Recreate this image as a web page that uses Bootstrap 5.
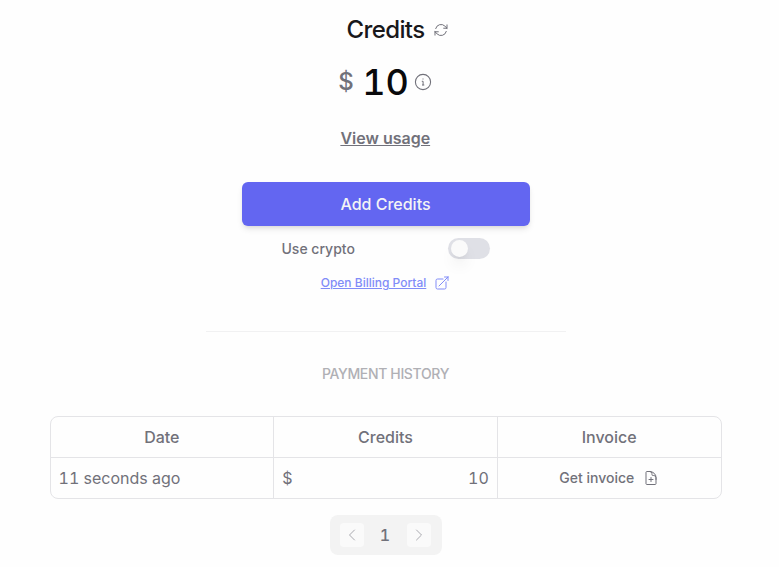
<!DOCTYPE html>
<html lang="en">
<head>
<meta charset="utf-8">
<meta name="viewport" content="width=device-width, initial-scale=1">
<title>Credits</title>
<link href="https://cdn.jsdelivr.net/npm/bootstrap@5.3.0/dist/css/bootstrap.min.css" rel="stylesheet">
<style>
body{font-family:Inter,"Liberation Sans",sans-serif;color:#71717a;background:#fefefe;line-height:24px;overflow:hidden}
svg{fill:none;stroke:currentColor;stroke-linecap:round;stroke-linejoin:round;flex:none;display:block}
.billing{width:672px;margin-left:49.5px;padding-top:14px}
.title{font-size:24px;line-height:32px;font-weight:500;color:#18181b;letter-spacing:-.6px;margin-left:24px;gap:8px}
.title svg{color:#71717a}
.balance{height:40px;margin-top:16px;margin-right:1px;font-variant-numeric:tabular-nums}
.currency{font-size:24px;font-weight:500;margin-right:8.5px}
.amount{font-size:36px;line-height:40px;font-weight:500;color:#09090b;margin-right:5px}
.usage{margin-top:24px;font-weight:600;color:#71717a;margin-right:.5px}
.add-btn{width:288px;height:44px;margin-top:32px;background:#6366f1!important;border:0;border-radius:6px;color:#f4f4f5!important;font-weight:500;box-shadow:0 4px 6px -1px #0000001a,0 2px 4px -2px #0000001a}
.crypto{width:208px;height:21px;margin-top:12px;font-size:14px;font-weight:500}
.switch-track{width:42px;height:21px;border-radius:11px;background:#dfe0e6;padding:2px 3px}
.switch-knob{width:17px;height:17px;border-radius:50%;background:#fafafa;box-shadow:0 10px 15px -3px #0000001a,0 4px 6px -4px #0000001a}
.portal{margin-top:12px;font-size:12px;font-weight:500;color:#818cf8;gap:8px}
.rule{width:360px;height:1px;background:#f1f1f2;margin-top:36px}
.history{margin-top:30px;font-size:14px;line-height:24px;font-weight:500;color:#b0b0b5;letter-spacing:-.35px}
.ledger{width:672px;height:83px;margin-top:30px;border:1px solid #e4e4e7;border-radius:8px;font-variant-numeric:tabular-nums}
.ledger .line{height:40px}
.ledger .line+.line{border-top:1px solid #e4e4e7;height:41px}
.cell{flex:1 1 0;padding:0 8px}
.cell+.cell{border-left:1px solid #e4e4e7}
.head{font-weight:500}
.invoice{font-size:14px;font-weight:500;margin-right:.7px}
.pager{width:112px;height:40px;margin-top:16px;border-radius:8px;background:#f3f3f3;padding:0 11px 0 10px;font-variant-numeric:tabular-nums}
.page-step{width:24px;height:24px;border:0;border-radius:4px;background:#fafafa;color:#aaaab0;padding:0}
</style>
</head>
<body>
<main class="billing d-flex flex-column align-items-center">
  <h1 class="title d-flex align-items-center mb-0"><span>Credits</span>
    <svg width="16" height="16" viewBox="0 0 24 24" stroke-width="1.5"><path d="M16.023 9.348h4.992V9.348M2.985 19.644V14.652m0 0h4.992m-4.993 0 3.181 3.183a8.25 8.25 0 0 0 13.803-3.7M4.031 9.865a8.25 8.25 0 0 1 13.803-3.7l3.181 3.182m0-4.991v4.99"/></svg>
  </h1>
  <div class="balance d-flex align-items-center">
    <span class="currency">$</span><span class="amount">10</span>
    <svg width="18" height="18" viewBox="0 0 18 18"><circle cx="9" cy="9" r="7.6" stroke-width="1.1"/><path d="M8.2 8.3h.9v3.5M8.4 12h1.5M9 5.9v.2"/></svg>
  </div>
  <a class="usage text-decoration-underline" href="#">View usage</a>
  <button class="btn add-btn" type="button">Add Credits</button>
  <div class="crypto d-flex align-items-center justify-content-between"><span>Use crypto</span><span class="switch-track" role="switch" aria-checked="false"><span class="switch-knob d-block"></span></span></div>
  <a class="portal d-flex align-items-center text-decoration-none" href="#"><span class="text-decoration-underline">Open Billing Portal</span>
    <svg width="16" height="16" viewBox="0 0 24 24" stroke-width="1.5"><path d="M13.5 6H5.25A2.25 2.25 0 0 0 3 8.25v10.5A2.25 2.25 0 0 0 5.25 21h10.5A2.25 2.25 0 0 0 18 18.75V10.5M7.5 16.5 21 3m0 0h-5.25M21 3v5.25"/></svg>
  </a>
  <div class="rule"></div>
  <h2 class="history text-uppercase mb-0">Payment history</h2>
  <section class="ledger">
    <div class="line d-flex text-center head">
      <div class="cell d-flex align-items-center justify-content-center">Date</div>
      <div class="cell d-flex align-items-center justify-content-center">Credits</div>
      <div class="cell d-flex align-items-center justify-content-center">Invoice</div>
    </div>
    <div class="line d-flex">
      <div class="cell d-flex align-items-center">11 seconds ago</div>
      <div class="cell d-flex align-items-center justify-content-between"><span>$</span><span>10</span></div>
      <div class="cell d-flex align-items-center justify-content-center gap-2"><span class="invoice">Get invoice</span>
        <svg width="16" height="16" viewBox="0 0 24 24" stroke-width="1.5"><path d="M19.5 14.25v-2.625a3.375 3.375 0 0 0-3.375-3.375h-1.5A1.125 1.125 0 0 1 13.5 7.125v-1.5a3.375 3.375 0 0 0-3.375-3.375H8.25m3.75 9v6m3-3H9m1.5-12H5.625c-.621 0-1.125.504-1.125 1.125v17.25c0 .621.504 1.125 1.125 1.125h12.75c.621 0 1.125-.504 1.125-1.125V11.25a9 9 0 0 0-9-9Z"/></svg>
      </div>
    </div>
  </section>
  <nav class="pager d-flex align-items-center justify-content-between" aria-label="Payment pages">
    <button class="page-step d-flex align-items-center justify-content-center" aria-label="Previous"><svg width="16" height="16" viewBox="0 0 24 24" stroke-width="1.5"><path d="M15.75 19.5 8.25 12l7.5-7.5"/></svg></button>
    <span class="fw-medium">1</span>
    <button class="page-step d-flex align-items-center justify-content-center" aria-label="Next"><svg width="16" height="16" viewBox="0 0 24 24" stroke-width="1.5"><path d="m8.25 4.5 7.5 7.5-7.5 7.5"/></svg></button>
  </nav>
</main>
<script src="https://cdn.jsdelivr.net/npm/bootstrap@5.3.0/dist/js/bootstrap.bundle.min.js"></script>
</body>
</html>
